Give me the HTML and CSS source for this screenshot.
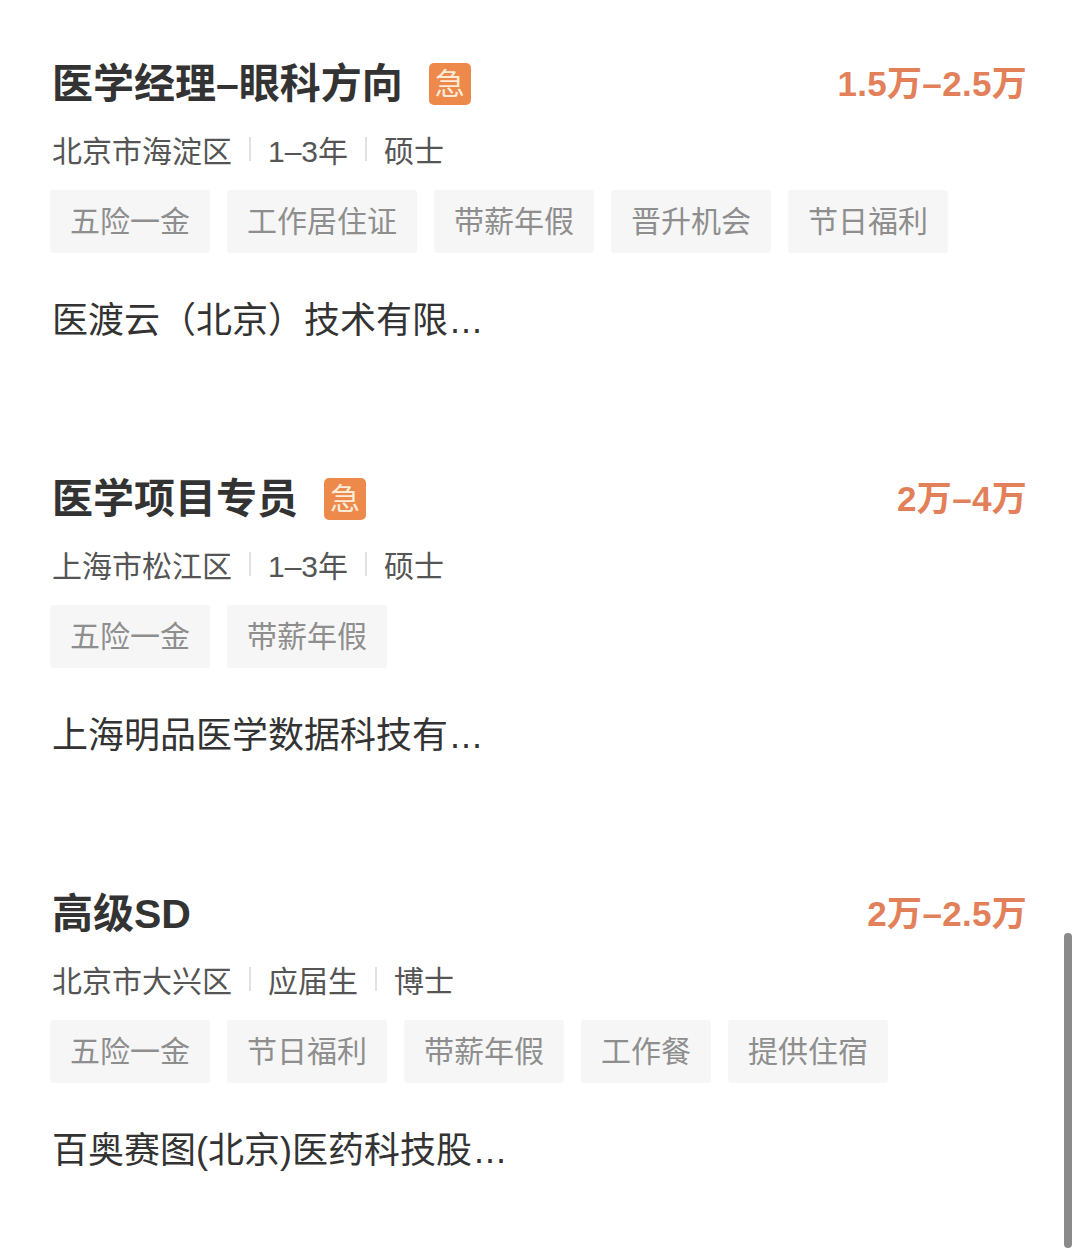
FILE: index.html
```html
<!DOCTYPE html>
<html lang="zh-CN">
<head>
<meta charset="utf-8">
<title>职位列表</title>
<link rel="stylesheet" href="styles.css">
</head>
<body>
<main class="list">
  <section class="job">
    <div class="job-head">
      <h2 class="job-title">医学经理–眼科方向<span class="urgent">急</span></h2>
      <div class="salary">1.5万–2.5万</div>
    </div>
    <div class="meta"><span>北京市海淀区</span><i class="sep"></i><span>1–3年</span><i class="sep"></i><span>硕士</span></div>
    <ul class="tags">
      <li>五险一金</li><li>工作居住证</li><li>带薪年假</li><li>晋升机会</li><li>节日福利</li>
    </ul>
    <div class="company">医渡云（北京）技术有限<span class="dots">...</span></div>
  </section>
  <section class="job">
    <div class="job-head">
      <h2 class="job-title">医学项目专员<span class="urgent">急</span></h2>
      <div class="salary">2万–4万</div>
    </div>
    <div class="meta"><span>上海市松江区</span><i class="sep"></i><span>1–3年</span><i class="sep"></i><span>硕士</span></div>
    <ul class="tags">
      <li>五险一金</li><li>带薪年假</li>
    </ul>
    <div class="company">上海明品医学数据科技有<span class="dots">...</span></div>
  </section>
  <section class="job">
    <div class="job-head">
      <h2 class="job-title">高级SD</h2>
      <div class="salary">2万–2.5万</div>
    </div>
    <div class="meta"><span>北京市大兴区</span><i class="sep"></i><span>应届生</span><i class="sep"></i><span>博士</span></div>
    <ul class="tags">
      <li>五险一金</li><li>节日福利</li><li>带薪年假</li><li>工作餐</li><li>提供住宿</li>
    </ul>
    <div class="company">百奥赛图(北京)医药科技股<span class="dots">...</span></div>
  </section>
</main>
<div class="scrollbar"></div>
</body>
</html>
```

FILE: styles.css
```css
html, body {
  margin: 0;
  padding: 0;
  background: #ffffff;
}
body {
  font-family: "Liberation Sans", "Noto Sans CJK SC", sans-serif;
  width: 1080px;
  height: 1259px;
  overflow: hidden;
  position: relative;
}
.list {
  padding: 54px 53px 0 50px;
}
.job {
  height: 415px;
}
.job-head {
  display: flex;
  align-items: center;
  justify-content: space-between;
  height: 60px;
}
.job-title {
  margin: 0;
  display: flex;
  align-items: center;
  font-size: 41px;
  font-weight: 700;
  color: #333333;
  line-height: 60px;
  padding-left: 2px;
}
.urgent {
  display: inline-flex;
  align-items: center;
  justify-content: center;
  width: 42px;
  height: 42px;
  margin-left: 26px;
  border-radius: 5px;
  background: #ec894b;
  color: #fdebd8;
  font-size: 30px;
  font-weight: 400;
  line-height: 1;
}
.salary {
  font-size: 35px;
  font-weight: 700;
  color: #e2805a;
  line-height: 60px;
  letter-spacing: 0.3px;
}
.meta {
  display: flex;
  align-items: center;
  margin-top: 15px;
  height: 40px;
  font-size: 30px;
  color: #555555;
  padding-left: 2px;
}
.sep {
  display: block;
  width: 2px;
  height: 24px;
  background: #e2e2e2;
  margin: 0 17px;
}
.tags {
  list-style: none;
  margin: 21px 0 0 0;
  padding: 0;
  display: flex;
  gap: 17px;
}
.tags li {
  height: 63px;
  line-height: 63px;
  padding: 0 20px;
  background: #f6f6f6;
  color: #8e8e8e;
  font-size: 30px;
  border-radius: 3px;
}
.company {
  margin-top: 43px;
  height: 50px;
  line-height: 50px;
  font-size: 36px;
  color: #333333;
  padding-left: 2px;
}
.dots {
  letter-spacing: 1px;
  margin-left: 2px;
}
.scrollbar {
  position: absolute;
  left: 1064px;
  top: 933px;
  width: 8px;
  height: 315px;
  border-radius: 4px;
  background: #8a8a8a;
}
```
